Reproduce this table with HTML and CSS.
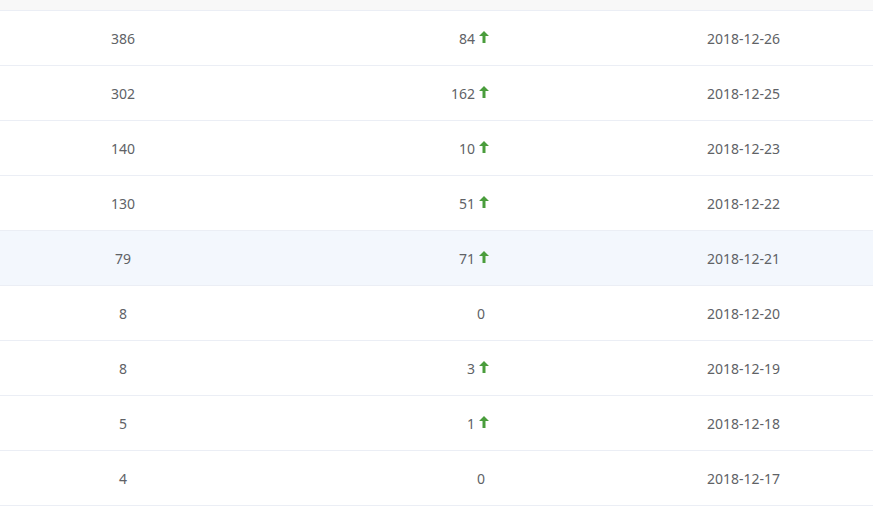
FILE: index.html
```html
<!DOCTYPE html>
<html lang="zh-CN">
<head>
    <meta charset="UTF-8">
    <meta name="viewport" content="width=device-width, initial-scale=1.0">
    <title>数据列表</title>
    <link rel="stylesheet" href="styles.css">
</head>
<body>
    <div class="table-wrap">
        <div class="table-head"></div>
        <div class="table-body">
            <div class="row">
                <div class="cell col-total">386</div>
                <div class="cell col-add">84<span class="up"><svg viewBox="0 0 10 12"><path d="M5 0 L10 5 L6.5 5 L6.5 12 L3.5 12 L3.5 5 L0 5 Z"/></svg></span></div>
                <div class="cell col-date">2018-12-26</div>
            </div>
            <div class="row">
                <div class="cell col-total">302</div>
                <div class="cell col-add">162<span class="up"><svg viewBox="0 0 10 12"><path d="M5 0 L10 5 L6.5 5 L6.5 12 L3.5 12 L3.5 5 L0 5 Z"/></svg></span></div>
                <div class="cell col-date">2018-12-25</div>
            </div>
            <div class="row">
                <div class="cell col-total">140</div>
                <div class="cell col-add">10<span class="up"><svg viewBox="0 0 10 12"><path d="M5 0 L10 5 L6.5 5 L6.5 12 L3.5 12 L3.5 5 L0 5 Z"/></svg></span></div>
                <div class="cell col-date">2018-12-23</div>
            </div>
            <div class="row">
                <div class="cell col-total">130</div>
                <div class="cell col-add">51<span class="up"><svg viewBox="0 0 10 12"><path d="M5 0 L10 5 L6.5 5 L6.5 12 L3.5 12 L3.5 5 L0 5 Z"/></svg></span></div>
                <div class="cell col-date">2018-12-22</div>
            </div>
            <div class="row hover">
                <div class="cell col-total">79</div>
                <div class="cell col-add">71<span class="up"><svg viewBox="0 0 10 12"><path d="M5 0 L10 5 L6.5 5 L6.5 12 L3.5 12 L3.5 5 L0 5 Z"/></svg></span></div>
                <div class="cell col-date">2018-12-21</div>
            </div>
            <div class="row">
                <div class="cell col-total">8</div>
                <div class="cell col-add flat">0</div>
                <div class="cell col-date">2018-12-20</div>
            </div>
            <div class="row">
                <div class="cell col-total">8</div>
                <div class="cell col-add">3<span class="up"><svg viewBox="0 0 10 12"><path d="M5 0 L10 5 L6.5 5 L6.5 12 L3.5 12 L3.5 5 L0 5 Z"/></svg></span></div>
                <div class="cell col-date">2018-12-19</div>
            </div>
            <div class="row">
                <div class="cell col-total">5</div>
                <div class="cell col-add">1<span class="up"><svg viewBox="0 0 10 12"><path d="M5 0 L10 5 L6.5 5 L6.5 12 L3.5 12 L3.5 5 L0 5 Z"/></svg></span></div>
                <div class="cell col-date">2018-12-18</div>
            </div>
            <div class="row">
                <div class="cell col-total">4</div>
                <div class="cell col-add flat">0</div>
                <div class="cell col-date">2018-12-17</div>
            </div>
        </div>
    </div>
</body>
</html>
```

FILE: styles.css
```css
body {
    margin: 0;
    padding: 0;
    background: #fff;
    font-family: "Noto Sans", "Liberation Sans", sans-serif;
    font-size: 14px;
    color: #606266;
    overflow: hidden;
}
.table-head {
    height: 10px;
    background: #f8f8f8;
    border-bottom: 1px solid #ebeef5;
}
.row {
    display: grid;
    grid-template-columns: 246px 245px 1fr;
    box-sizing: border-box;
    height: 55px;
    padding-top: 2px;
    align-items: center;
    border-bottom: 1px solid #ebeef5;
}
.row.hover {
    background: #f3f7fd;
}
.cell {
    line-height: 20px;
    white-space: nowrap;
}
.col-total {
    text-align: center;
}
.col-date {
    padding-left: 216px;
}
.col-add {
    display: flex;
    justify-content: flex-end;
    align-items: center;
}
.col-add.flat {
    padding-right: 6px;
}
.up {
    display: inline-flex;
    margin: -5px 2px 0 4px;
}
.up svg {
    width: 10px;
    height: 12px;
    fill: #4a9d3c;
}
```
